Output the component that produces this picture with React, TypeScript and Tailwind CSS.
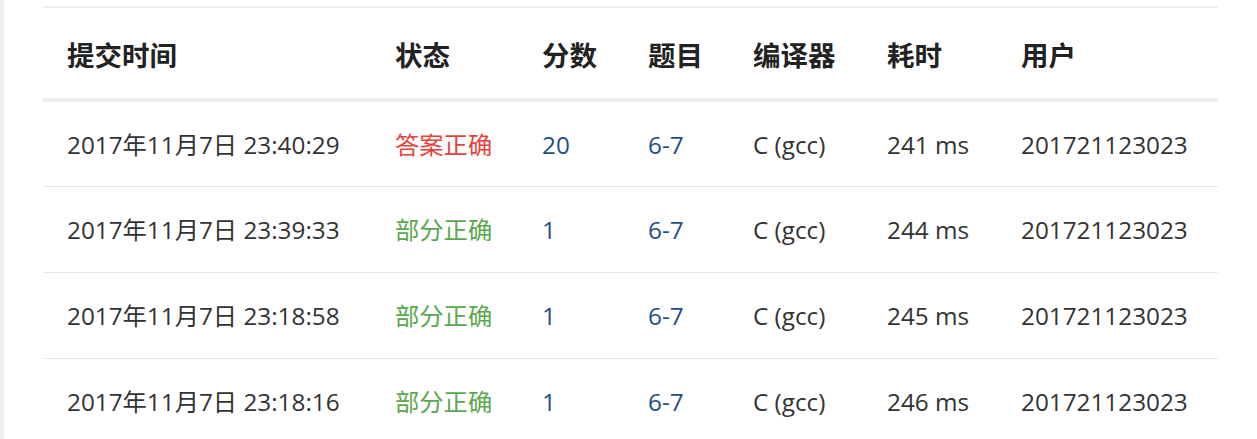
import React from "react";

const rows = [
  { time: "2017年11月7日 23:40:29", status: "答案正确", ok: true, score: "20", prob: "6-7", comp: "C (gcc)", t: "241 ms", user: "201721123023" },
  { time: "2017年11月7日 23:39:33", status: "部分正确", ok: false, score: "1", prob: "6-7", comp: "C (gcc)", t: "244 ms", user: "201721123023" },
  { time: "2017年11月7日 23:18:58", status: "部分正确", ok: false, score: "1", prob: "6-7", comp: "C (gcc)", t: "245 ms", user: "201721123023" },
  { time: "2017年11月7日 23:18:16", status: "部分正确", ok: false, score: "1", prob: "6-7", comp: "C (gcc)", t: "246 ms", user: "201721123023" },
];

const heads = ["提交时间", "状态", "分数", "题目", "编译器", "耗时", "用户"];
const widths = ["w-[328px]", "w-[147px]", "w-[106px]", "w-[105px]", "w-[134px]", "w-[134px]", "w-[221px]"];

export default function App() {
  return (
    <div
      className="w-[1257px] h-[439px] overflow-hidden bg-white flex"
      style={{ fontFamily: '"Open Sans", "Noto Sans CJK SC", sans-serif' }}
    >
      <div className="w-[4px] bg-[#ececec] shrink-0" />
      <div className="pl-[39px] pt-[6px]">
        <table className="w-[1175px] border-collapse table-fixed text-[#333] border-t-2 border-[#eeeeee]">
          <colgroup>
            {widths.map((w, i) => (
              <col key={i} className={w} />
            ))}
          </colgroup>
          <thead>
            <tr className="h-[93px] border-b-4 border-[#eeeeee]">
              {heads.map((h) => (
                <th key={h} className="text-left font-bold text-[27.5px] text-[#222] pl-6 pt-[6px] align-middle">
                  {h}
                </th>
              ))}
            </tr>
          </thead>
          <tbody>
            {rows.map((r, i) => (
              <tr key={i} className="h-[86px] border-b border-[#e8e8e8] text-[24.3px]">
                <td className="pl-6 pt-[3px] whitespace-nowrap">{r.time}</td>
                <td className={"pl-6 pt-[3px] " + (r.ok ? "text-[#e8413c]" : "text-[#5aa84f]")}>{r.status}</td>
                <td className="pl-6 pt-[3px] text-[#1f4f85]">{r.score}</td>
                <td className="pl-6 pt-[3px] text-[#1f4f85]">{r.prob}</td>
                <td className="pl-6 pt-[3px]">{r.comp}</td>
                <td className="pl-6 pt-[3px]">{r.t}</td>
                <td className="pl-6 pt-[3px]">{r.user}</td>
              </tr>
            ))}
          </tbody>
        </table>
      </div>
    </div>
  );
}
